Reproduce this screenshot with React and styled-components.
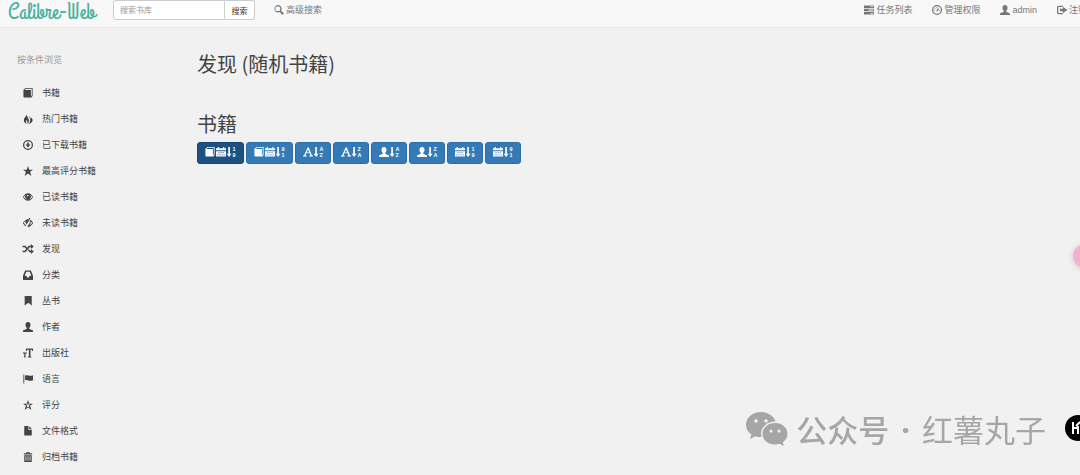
import React from "react";
import styled, { ThemeProvider, createGlobalStyle } from "styled-components";

const theme = {
  colors: {
    page: "#f1f1f1",
    navbar: "#f8f8f8",
    line: "#e9e9e9",
    brand: "#45b29d",
    nav: "#777777",
    text: "#444444",
    muted: "#999999",
    primary: "#337ab7",
    active: "#1c5181",
    watermark: "#a6a6a6",
  },
};

// 图标路径，统一画在 24x24 的网格里
const icons = {
  book: (
    <path
      fillRule="evenodd"
      d="M6 0h17v19l-3 4H4c-2 0-3-1-3-3V5zM7 2L4 5h15v15l2-2V2z"
    />
  ),
  fire: (
    <path d="M9 0c1 4-7 8-7 15 0 4 3 7 7 9-3-4-2-8 1-10-1 4 2 5 1 10 3-2 4-6 3-10-1-5-5-7-5-14zm6 4c0 5 3 7 2 12 0 3-1 5-3 8 5-1 9-5 9-9s-3-6-4-7c0 2 0 3-1 5 0-4-1-6-3-9z" />
  ),
  download: (
    <path
      fillRule="evenodd"
      d="M12 0a12 12 0 1 0 0 24 12 12 0 0 0 0-24zm0 3a9 9 0 1 1 0 18 9 9 0 0 1 0-18zm-2 3v5H6l6 7 6-7h-4V6z"
    />
  ),
  star: <path d="M12 0l3 9h9l-7 5 3 10-8-6-8 6 3-10-7-5h9z" />,
  eye: (
    <path
      fillRule="evenodd"
      d="M12 3C6 3 2 8 0 12c2 4 6 9 12 9s10-5 12-9c-2-4-6-9-12-9zM6 7a7 7 0 1 0 12 0c2 1 3 3 4 5-2 3-5 6-10 6s-8-3-10-6c1-2 2-4 4-5zm6 0l2 1-3 3-2-1c0-2 1-3 3-3z"
    />
  ),
  eyeClosed: (
    <path d="M11 3C6 4 2 8 0 12c1 3 4 6 7 8l1-3c-3-1-5-3-6-5 1-2 2-4 4-5 0 4 1 6 3 8L18 0h-3l-2 3zM17 4l-1 4c1 3 0 6-3 8l-2 6c6 0 11-5 13-10-1-3-4-7-7-8zm1 4c1 1 3 2 4 4-1 2-3 4-6 5 2-3 3-6 2-9z" />
  ),
  random: (
    <path d="M-1 4h7l4 5-2 3-4-4h-5zM-1 16h5L14 4h5V0l7 6-7 6V8h-3L6 20h-7zM12 15l2-3 3 4h2v-4l7 6-7 6v-4h-4z" />
  ),
  inbox: (
    <path
      fillRule="evenodd"
      d="M5 1h14l5 13v10H0V14zm3 3L4 14h4l2 4h4l2-4h4L16 4z"
    />
  ),
  bookmark: <path d="M4 0h17v23l-8-7-9 7z" />,
  user: (
    <path d="M12 0c4 0 6 3 6 7 0 3-1 5-3 7v2c2 2 8 2 9 5v3H0v-3c1-3 7-3 9-5v-2c-2-2-3-4-3-7 0-4 2-7 6-7z" />
  ),
  textSize: (
    <g>
      <path d="M7 1h17v6h-2l-1-3h-3v16l2 1v2h-8v-2l2-1V4h-4L9 7H7z" />
      <path d="M0 11h9v3H8l-1-1H6v8l1 1v1H2v-1l1-1v-8H2l-1 1H0z" />
    </g>
  ),
  flag: <path d="M1 1h2v22H1zM5 4c6-4 9 3 19-1v12c-9 4-13-3-19 0z" />,
  starEmpty: (
    <path
      fillRule="evenodd"
      d="M12 0l3 9h9l-7 5 3 10-8-6-8 6 3-10-7-5h9zm0 7l-1 4H7l3 3-1 4 3-2 3 2-1-4 3-3h-4z"
    />
  ),
  file: <path d="M3 0h10v9h8v14H3zM15 0l6 7h-6z" />,
  trash: (
    <path
      fillRule="evenodd"
      d="M8 0h8v3h6v3H2V3h6zM10 2v1h4V2zM3 8h18v16H3zm3 2v11h2V10zm5 0v11h2V10zm5 0v11h2V10z"
    />
  ),
  search: (
    <path
      fillRule="evenodd"
      d="M9 0a9 9 0 1 0 5 17l6 7 4-4-7-6A9 9 0 0 0 9 0zm0 3a6 6 0 1 1 0 12A6 6 0 0 1 9 3z"
    />
  ),
  tasks: (
    <path
      fillRule="evenodd"
      d="M0 1h24v6H0zm16 2v2h6V3zM0 9h24v6H0zm11 2v2h11v-2zM0 17h24v6H0zm16 2v2h6v-2z"
    />
  ),
  dashboard: (
    <path
      fillRule="evenodd"
      d="M12 0a12 12 0 1 0 0 24 12 12 0 0 0 0-24zm0 3a9 9 0 1 1 0 18 9 9 0 0 1 0-18zm-1 2v3h2V5zM6 8v2h2V8zm9 0l-4 4v3h3l3-6zM5 12v2h2v-2zm12 0v2h2v-2z"
    />
  ),
  logout: (
    <path d="M4 2h10v3H5C3 5 3 6 3 7v10c0 2 1 2 2 2h9v3H4c-3 0-4-2-4-4V6c0-2 1-4 4-4zM14 4l11 8-11 8v-5H7V9h7z" />
  ),
  calendar: (
    <path
      fillRule="evenodd"
      d="M4 0h3v3h10V0h3v3h4v5H0V3h4zM0 10h24v13H0zm6 2v3h2v-3zm5 0v3h2v-3zm5 0v3h2v-3zM3 18v2h3v-2zm5 0v2h3v-2zm5 0v2h3v-2zm5 0v2h3v-2z"
    />
  ),
  font: (
    <path
      fillRule="evenodd"
      d="M11 1h3l7 18 3 2v2h-9v-2l3-1-2-5H8l-2 5 3 1v2H0v-2l3-2zm1 5L9 13h6z"
    />
  ),
};

const Icon = ({ name }) => (
  <Svg viewBox="0 0 24 24" aria-hidden="true">
    {icons[name]}
  </Svg>
);

// 排序图标：箭头加上下两个字符
const SortIcon = ({ order }) => (
  <Svg viewBox="0 0 24 24" aria-hidden="true">
    <path d="M3 0h4v16h4l-6 8-6-8h4z" />
    <SortText x="13" y="10">
      {order[0]}
    </SortText>
    <SortText x="13" y="23">
      {order[1]}
    </SortText>
  </Svg>
);

const menu = [
  ["book", "书籍"],
  ["fire", "热门书籍"],
  ["download", "已下载书籍"],
  ["star", "最高评分书籍"],
  ["eye", "已读书籍"],
  ["eyeClosed", "未读书籍"],
  ["random", "发现"],
  ["inbox", "分类"],
  ["bookmark", "丛书"],
  ["user", "作者"],
  ["textSize", "出版社"],
  ["flag", "语言"],
  ["starEmpty", "评分"],
  ["file", "文件格式"],
  ["trash", "归档书籍"],
];

const links = [
  ["tasks", "任务列表"],
  ["dashboard", "管理权限"],
  ["user", "admin"],
  ["logout", "注销"],
];

const sorts = [
  { icons: ["book", "calendar"], order: "19", label: "最新添加" },
  { icons: ["book", "calendar"], order: "91", label: "最早添加" },
  { icons: ["font"], order: "AZ", label: "书名升序" },
  { icons: ["font"], order: "ZA", label: "书名降序" },
  { icons: ["user"], order: "AZ", label: "作者升序" },
  { icons: ["user"], order: "ZA", label: "作者降序" },
  { icons: ["calendar"], order: "19", label: "出版日期升序" },
  { icons: ["calendar"], order: "91", label: "出版日期降序" },
];

const App = () => {
  return (
    <ThemeProvider theme={theme}>
      <GlobalStyle />
      <Navbar>
        <Brand href="#">Calibre-Web</Brand>
        <SearchForm onSubmit={(e) => e.preventDefault()}>
          <SearchInput type="text" placeholder="搜索书库" aria-label="搜索书库" />
          <SearchButton type="submit">搜索</SearchButton>
        </SearchForm>
        <NavLink href="#">
          <Icon name="search" />
          高级搜索
        </NavLink>
        <NavRight>
          {links.map(([icon, text]) => (
            <NavLink href="#" key={text}>
              <Icon name={icon} />
              {text}
            </NavLink>
          ))}
        </NavRight>
      </Navbar>

      <Content>
        <Sidebar>
          <SidebarTitle>按条件浏览</SidebarTitle>
          <Menu>
            {menu.map(([icon, text]) => (
              <li key={text}>
                <MenuLink href="#">
                  <Icon name={icon} />
                  {text}
                </MenuLink>
              </li>
            ))}
          </Menu>
        </Sidebar>

        <Main>
          <Title>发现 (随机书籍)</Title>
          <Title $spaced>书籍</Title>
          <Toolbar>
            {sorts.map((sort, index) => (
              <SortButton
                type="button"
                key={sort.label}
                aria-label={sort.label}
                $active={index === 0}
                $wide={sort.icons.length > 1}
              >
                {sort.icons.map((name) => (
                  <Icon name={name} key={name} />
                ))}
                <SortIcon order={sort.order} />
              </SortButton>
            ))}
          </Toolbar>
        </Main>
      </Content>

      <Bubble />
      <Watermark>
        <WechatLogo viewBox="0 0 42 34" aria-hidden="true">
          <path d="M15 0C6.700 0 0 5.600 0 12.800c0 4 2 7.400 5.400 9.800L4 27l5.400-2.800c1.800.6 3.600.9 5.600.9C23.300 25.100 30 19.700 30 12.800 30 5.600 23.300 0 15 0z" />
          <ellipse cx="29" cy="22" rx="14" ry="12.5" fill="#f1f1f1" />
          <path d="M29 11c-7 0-12.500 4.800-12.500 11S22 32.500 29 32.500c1.700 0 3.200-.3 4.600-.8L38 34l-1.200-3.800c2.900-2 4.700-4.900 4.700-8.200C41.500 15.800 36 11 29 11z" />
          <g fill="#f1f1f1">
            <circle cx="10" cy="9" r="1.8" />
            <circle cx="20" cy="9" r="1.8" />
            <circle cx="25" cy="19" r="1.5" />
            <circle cx="33" cy="19" r="1.5" />
          </g>
        </WechatLogo>
        <Account>公众号</Account>
        <Dot>·</Dot>
        <span>红薯丸子</span>
      </Watermark>
      <Badge viewBox="0 0 26 26" aria-hidden="true">
        <circle cx="13" cy="13" r="13" />
        <path d="M8 7v12M8 13h6M13 19v-8M11 11l4-4" />
      </Badge>
    </ThemeProvider>
  );
};

export default App;

const GlobalStyle = createGlobalStyle`
  * {
    box-sizing: border-box;
  }

  body {
    margin: 0;
    overflow: hidden;
    background-color: ${({ theme }) => theme.colors.page};
    color: ${({ theme }) => theme.colors.text};
    font-family: "Liberation Sans", "Noto Sans CJK SC", sans-serif;
    font-size: 9px;
    line-height: 14px;
  }

  a {
    text-decoration: none;
  }
`;

const Svg = styled.svg`
  flex: none;
  width: 10px;
  height: 10px;
  fill: currentColor;
  overflow: visible;
`;

const SortText = styled.text`
  font-size: 13px;
  font-weight: bold;
`;

const Navbar = styled.nav`
  display: flex;
  align-items: flex-start;
  height: 28px;
  padding-left: 8px;
  background-color: ${({ theme }) => theme.colors.navbar};
  border-bottom: 1px solid ${({ theme }) => theme.colors.line};
`;

const Brand = styled.a`
  width: 105px;
  color: ${({ theme }) => theme.colors.brand};
  font-family: "Grand Hotel", cursive;
  font-size: 23px;
  line-height: 23px;
  white-space: nowrap;
`;

const SearchForm = styled.form`
  display: flex;
  height: 20px;
  margin-right: 19px;
`;

const SearchInput = styled.input`
  width: 112px;
  padding: 0 6px;
  background-color: #ffffff;
  border: 1px solid #cccccc;
  border-radius: 3px 0 0 3px;
  font-family: inherit;
  font-size: 8px;

  &::placeholder {
    color: ${({ theme }) => theme.colors.muted};
  }
`;

const SearchButton = styled.button`
  width: 30px;
  padding: 0;
  background-color: #ffffff;
  border: 1px solid #cccccc;
  border-left: none;
  border-radius: 0 3px 3px 0;
  color: #333333;
  font-family: inherit;
  font-size: 8px;
`;

const NavLink = styled.a`
  display: flex;
  align-items: center;
  gap: 2px;
  height: 20px;
  color: ${({ theme }) => theme.colors.nav};
  white-space: nowrap;
`;

const NavRight = styled.div`
  display: flex;
  gap: 20px;
  margin-left: auto;
  margin-right: -7px;
`;

const Content = styled.div`
  display: grid;
  grid-template-columns: 1fr 5fr;
`;

const Sidebar = styled.aside`
  padding: 25px 17px 0;
`;

const SidebarTitle = styled.div`
  color: ${({ theme }) => theme.colors.muted};
`;

const Menu = styled.ul`
  margin: 13px 0 0;
  padding: 0;
  list-style: none;
`;

const MenuLink = styled.a`
  display: flex;
  align-items: center;
  gap: 9px;
  height: 26px;
  padding-left: 6px;
  color: ${({ theme }) => theme.colors.text};
`;

const Main = styled.main`
  padding: 22px 17px 0;
`;

const Title = styled.h2`
  margin: ${({ $spaced }) => ($spaced ? "32px" : "0")} 0 0;
  font-family: "Noto Sans CJK SC", sans-serif;
  font-size: 20px;
  font-weight: 400;
  line-height: 28px;
`;

const Toolbar = styled.div`
  display: flex;
  gap: 2px;
  margin-top: 4px;
`;

const SortButton = styled.button`
  display: flex;
  align-items: center;
  justify-content: center;
  gap: 1px;
  width: ${({ $wide }) => ($wide ? "47px" : "36px")};
  height: 22px;
  padding: 0 0 2px;
  background-color: ${({ theme, $active }) =>
    $active ? theme.colors.active : theme.colors.primary};
  border: 1px solid ${({ $active }) => ($active ? "#184672" : "#2e6da4")};
  border-radius: 3px;
  color: #ffffff;
  font-family: inherit;
`;

const Bubble = styled.div`
  position: fixed;
  top: 244px;
  right: -17px;
  width: 24px;
  height: 24px;
  background-color: #f9b0d0;
  border-radius: 50%;
  box-shadow: 0 1px 6px rgba(0, 0, 0, 0.15);
`;

const Watermark = styled.div`
  position: fixed;
  right: 34px;
  bottom: 24px;
  display: flex;
  align-items: center;
  gap: 8px;
  color: ${({ theme }) => theme.colors.watermark};
  font-family: "Noto Sans CJK SC", sans-serif;
  font-size: 31px;
  line-height: 44px;
`;

const WechatLogo = styled.svg`
  width: 42px;
  height: 34px;
  fill: currentColor;
`;

const Account = styled.span`
  font-weight: 500;
`;

const Dot = styled.span`
  padding: 0 4px;
  font-family: "Noto Sans", sans-serif;
  font-weight: bold;
`;

const Badge = styled.svg`
  position: fixed;
  right: -11px;
  bottom: 34px;
  width: 26px;
  height: 26px;
  fill: #000000;
  stroke: #ffffff;
  stroke-width: 2;

  circle {
    stroke: none;
  }
`;
